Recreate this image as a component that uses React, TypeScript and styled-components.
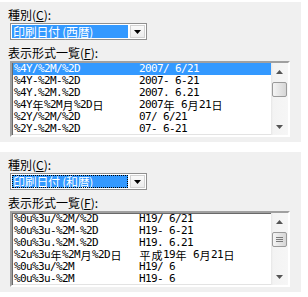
import React from "react";
import styled, { createGlobalStyle, css } from "styled-components";

const Global = createGlobalStyle`
  html, body { margin: 0; padding: 0; background: #ffffff; }
  body { font-family: "Noto Sans CJK JP", "Noto Sans", sans-serif; }
  * { box-sizing: border-box; }
`;

const Page = styled.div`
  width: 308px;
  height: 297px;
  padding-top: 2px;
  display: flex;
  flex-direction: column;
  gap: 10px;
  background: #ffffff;
`;

const Panel = styled.section`
  width: 301px;
  background: #f0f0f0;
  padding: 5px 0 5px 8px;
  display: flex;
  flex-direction: column;
`;

const Label = styled.div<{ $gap?: number }>`
  height: 15px;
  margin-top: ${(p) => p.$gap ?? 0}px;
  font-family: "Noto Sans CJK JP", sans-serif;
  font-size: 12px;
  line-height: 15px;
  color: #000;
  white-space: pre;
  u { text-decoration: underline; text-underline-offset: 1px; }
`;

const Combo = styled.div`
  margin: 1px 0 0 2px;
  width: 137px;
  height: 17px;
  border: 1px solid #8f8f8f;
  background: #ffffff;
  padding: 1px;
  display: flex;
  gap: 2px;
`;

const ComboValue = styled.div<{ $focus?: boolean }>`
  flex: 1;
  background: #3399ff;
  color: #ffffff;
  font-family: "Noto Sans CJK JP", sans-serif;
  font-size: 12px;
  line-height: 13px;
  padding-left: 1px;
  letter-spacing: -0.3px;
  white-space: pre;
  ${(p) =>
    p.$focus &&
    css`
      outline: 1px dotted #000;
      outline-offset: -1px;
    `}
`;

const ComboButton = styled.div`
  width: 15px;
  background: linear-gradient(#fafafa, #ececec);
  border: 1px solid #d2d2d2;
  display: flex;
  align-items: center;
  justify-content: center;
`;

const List = styled.div`
  margin: 1px 0 0 2px;
  width: 280px;
  height: 76px;
  border-style: solid;
  border-width: 2px;
  border-color: #a0a0a0 #ffffff #ffffff #a0a0a0;
  box-shadow: inset 1px 1px 0 #696969, inset -1px -1px 0 #e3e3e3;
  background: #ffffff;
  display: flex;
  overflow: hidden;
`;

const Rows = styled.div`
  flex: 1;
  display: flex;
  flex-direction: column;
  padding-top: 0;
  padding-left: 1px;
  overflow: hidden;
`;

const Row = styled.div<{ $selected?: boolean }>`
  display: grid;
  grid-template-columns: 125px 1fr;
  height: 12px;
  flex: none;
  padding-left: 1px;
  font-family: "DejaVu Sans Mono", "Liberation Mono", monospace;
  font-size: 11px;
  letter-spacing: -0.62px;
  line-height: 12px;
  white-space: pre;
  color: ${(p) => (p.$selected ? "#ffffff" : "#000000")};
  background: ${(p) => (p.$selected ? "#3399ff" : "transparent")};
`;

const Wide = styled.span`
  display: inline-block;
  width: 12px;
  text-align: center;
  letter-spacing: 0;
  font-family: "Noto Sans CJK JP", sans-serif;
  font-size: 11px;
  line-height: 12px;
  vertical-align: top;
`;

const ScrollBar = styled.div`
  width: 17px;
  display: flex;
  flex-direction: column;
  background: linear-gradient(to right, #e6e6e6, #f3f3f3 2px, #f6f6f6);
`;

const ArrowButton = styled.div`
  height: 17px;
  flex: none;
  display: flex;
  align-items: center;
  justify-content: center;
`;

const Thumb = styled.div`
  margin: 2px 1px 0 1px;
  height: 15px;
  flex: none;
  border: 1px solid #9a9a9a;
  border-radius: 2px;
  background: linear-gradient(to right, #f4f4f4, #e2e2e2 60%, #d6d6d6);
  display: flex;
  align-items: center;
  justify-content: center;
`;

const Track = styled.div`
  flex: 1;
`;

const Tri = ({ dir, color = "#000" }: { dir: "up" | "down"; color?: string }) => (
  <svg width="7" height="4" viewBox="0 0 7 4">
    {dir === "down" ? (
      <polygon points="0,0 7,0 3.5,4" fill={color} />
    ) : (
      <polygon points="0,4 7,4 3.5,0" fill={color} />
    )}
  </svg>
);

const Grip = () => (
  <svg width="7" height="6" viewBox="0 0 7 6">
    <rect x="0" y="0" width="7" height="1" fill="#7a7a7a" />
    <rect x="0" y="2" width="7" height="1" fill="#7a7a7a" />
    <rect x="0" y="4" width="7" height="1" fill="#7a7a7a" />
  </svg>
);

function mono(s: string) {
  const out: React.ReactNode[] = [];
  let buf = "";
  Array.from(s).forEach((ch, i) => {
    if (ch.charCodeAt(0) > 0x2e80) {
      if (buf) out.push(buf);
      buf = "";
      out.push(<Wide key={i}>{ch}</Wide>);
    } else buf += ch;
  });
  if (buf) out.push(buf);
  return out;
}

type Item = [string, string];

const seireki: Item[] = [
  ["%4Y/%2M/%2D", "2007/ 6/21"],
  ["%4Y-%2M-%2D", "2007- 6-21"],
  ["%4Y.%2M.%2D", "2007. 6.21"],
  ["%4Y年%2M月%2D日", "2007年 6月21日"],
  ["%2Y/%2M/%2D", "07/ 6/21"],
  ["%2Y-%2M-%2D", "07- 6-21"],
];

const wareki: Item[] = [
  ["%0u%3u/%2M/%2D", "H19/ 6/21"],
  ["%0u%3u-%2M-%2D", "H19- 6-21"],
  ["%0u%3u.%2M.%2D", "H19. 6.21"],
  ["%2u%3u年%2M月%2D日", "平成19年 6月21日"],
  ["%0u%3u/%2M", "H19/ 6"],
  ["%0u%3u-%2M", "H19- 6"],
];

const FormatPanel = ({
  kind,
  items,
  selected,
  focusCombo,
  grip,
}: {
  kind: string;
  items: Item[];
  selected: number;
  focusCombo?: boolean;
  grip?: boolean;
}) => (
  <Panel>
    <Label>
      種別(<u>C</u>):
    </Label>
    <Combo>
      <ComboValue $focus={focusCombo}>{kind}</ComboValue>
      <ComboButton>
        <Tri dir="down" />
      </ComboButton>
    </Combo>
    <Label $gap={5}>
      表示形式一覧(<u>F</u>):
    </Label>
    <List>
      <Rows>
        {items.map(([a, b], i) => (
          <Row key={i} $selected={i === selected}>
            <span>{mono(a)}</span>
            <span>{mono(b)}</span>
          </Row>
        ))}
      </Rows>
      <ScrollBar>
        <ArrowButton>
          <Tri dir="up" color="#555" />
        </ArrowButton>
        <Thumb>{grip && <Grip />}</Thumb>
        <Track />
        <ArrowButton>
          <Tri dir="down" color="#555" />
        </ArrowButton>
      </ScrollBar>
    </List>
  </Panel>
);

export default function App() {
  return (
    <>
      <Global />
      <Page>
        <FormatPanel kind="印刷日付 (西暦)" items={seireki} selected={0} />
        <FormatPanel kind="印刷日付 (和暦)" items={wareki} selected={-1} focusCombo grip />
      </Page>
    </>
  );
}
